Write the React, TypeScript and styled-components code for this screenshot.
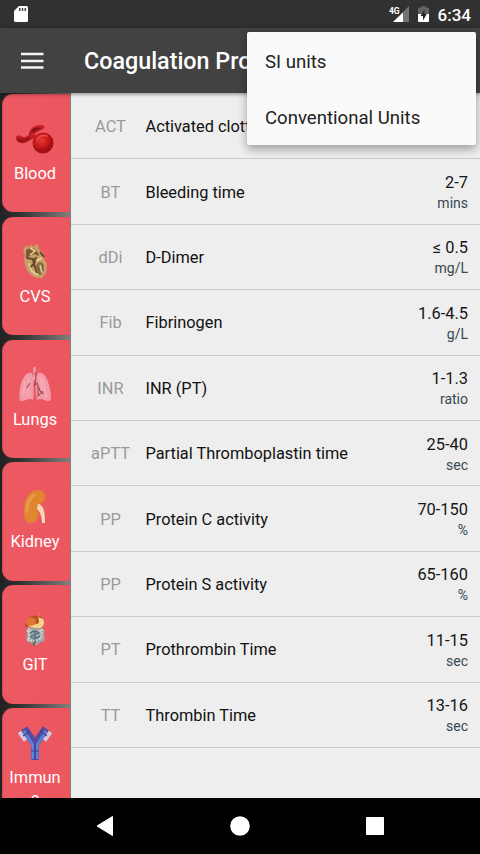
import React from 'react'
import styled, { createGlobalStyle } from 'styled-components'

const GlobalStyle = createGlobalStyle`
  body {
    margin: 0;
    background-color: #000;
    font-family: Roboto, 'Noto Sans', sans-serif;
  }
  * {
    box-sizing: border-box;
  }
  svg {
    display: block;
  }
`

const Screen = styled.div`
  position: relative;
  display: flex;
  flex-direction: column;
  width: 480px;
  height: 854px;
  overflow: hidden;
`

const StatusBar = styled.header`
  display: flex;
  align-items: center;
  flex: 0 0 28px;
  padding: 0 9px 0 14px;
  background: #313131;
  color: #fff;
`

const StatusIcons = styled.div`
  display: flex;
  align-items: center;
  gap: 8px;
  margin-left: auto;
`

const Clock = styled.span`
  padding-top: 2px;
  font-size: 17px;
  font-weight: 500;
  line-height: 20px;
`

const Toolbar = styled.div`
  display: flex;
  align-items: center;
  flex: 0 0 65px;
  padding-left: 21px;
  background: #424242;
  box-shadow: 0 1px 4px rgba(0, 0, 0, 0.45);
  z-index: 1;
`

const Title = styled.h1`
  margin: 1px 0 0 40px;
  color: #fff;
  font-size: 23.3px;
  font-weight: 500;
  white-space: nowrap;
`

const Content = styled.main`
  display: flex;
  flex: 1;
  min-height: 0;
`

const Sidebar = styled.nav`
  display: flex;
  flex-direction: column;
  gap: 4.4px;
  flex: 0 0 70.5px;
  padding: 1px 0.5px 0 2px;
  overflow: hidden;
  background: linear-gradient(90deg, #222 0, #2e2e2e 25%, #858080 100%);
`

const Tile = styled.div<{ $tall?: boolean }>`
  display: flex;
  flex-direction: column;
  align-items: center;
  flex: 0 0 118.4px;
  padding: ${props => props.$tall ? 16 : 26}px 2px 0 0;
  border-radius: 11px 0 0 11px;
  background: linear-gradient(90deg, #ed5a63, #ec565e);
  color: #fff;
  box-shadow: inset 1px 0 1px rgba(120, 40, 40, 0.25);
`

const TileLabel = styled.span`
  width: 54px;
  margin-top: 5px;
  font-size: 16.4px;
  line-height: 21px;
  text-align: center;
  word-break: break-all;
`

const List = styled.ul`
  flex: 1;
  margin: 0;
  padding: 1px 0 0;
  list-style: none;
  background: #eee;
`

const Row = styled.li`
  display: grid;
  grid-template-columns: 80px 1fr auto;
  align-items: center;
  height: 65.4px;
  padding-right: 12px;
  border-bottom: 1px solid #cacaca;
`

const Code = styled.span`
  padding-top: 1px;
  color: #999;
  font-size: 16.4px;
  text-align: center;
`

const Name = styled.span`
  margin-left: -5px;
  padding-top: 1px;
  color: #111;
  font-size: 16.35px;
`

const Range = styled.div`
  padding-top: 2px;
  color: #151515;
  font-size: 16.4px;
  line-height: 21px;
  text-align: right;
`

const Unit = styled.div`
  color: #37474f;
  font-size: 14px;
  line-height: 20px;
`

const Menu = styled.div`
  position: absolute;
  top: 32px;
  left: 247px;
  width: 228.5px;
  height: 112.5px;
  border-radius: 2px;
  background: #fafafa;
  box-shadow: 0 4px 10px rgba(0, 0, 0, 0.35);
  z-index: 2;
`

const MenuItem = styled.div`
  display: flex;
  align-items: center;
  height: 56px;
  padding: 3px 18px 0;
  color: #222;
  font-size: 18.6px;
`

const NavBar = styled.footer`
  display: flex;
  align-items: center;
  justify-content: space-between;
  flex: 0 0 56px;
  padding: 0 95px;
  background: #000;
`

const SdCardIcon = () => (
  <svg width="15" height="18" viewBox="0 0 15 18">
    <path d="M5 1h7.500Q14 1 14 2.500V15.500Q14 17 12.500 17H1.500Q0 17 0 15.500V6z" fill="#fff" />
    <path d="M5.700 3v3M8.500 3v3M11.300 3v3" stroke="#444" strokeWidth="1.500" />
  </svg>
)

const SignalIcon = () => (
  <svg width="21" height="18" viewBox="0 0 21 18">
    <path d="M20 1v16H4z" fill="#737373" />
    <path d="M14 7.500V17H4z" fill="#fff" />
    <text x="0" y="8.500" fill="#fff" fontSize="8.500" fontWeight="700" textLength="10.500">4G</text>
  </svg>
)

const BatteryIcon = () => (
  <svg width="12" height="18" viewBox="0 0 12 18">
    <path d="M3.500 1h4v1.500H10Q11 2.500 11 3.500V16Q11 17 10 17H1Q0 17 0 16V3.500Q0 2.500 1 2.500h2.500z" fill="#626262" />
    <path d="M0 9h11v7q0 1-1 1H1q-1 0-1-1z" fill="#fff" />
    <path d="M6.500 4.500 2.500 11H5v4.500L8.800 9H6.500z" fill="#262626" />
  </svg>
)

const MenuIcon = () => (
  <svg width="23" height="17" viewBox="0 0 23 17">
    <path d="M0 2h22.500M0 9h22.500M0 15.500h22.500" stroke="#f5f5f5" strokeWidth="2.300" />
  </svg>
)

const BloodIcon = () => (
  <svg width="40" height="38" viewBox="0 0 40 38">
    <defs>
      <radialGradient id="cell" cx="42%" cy="36%">
        <stop offset="0" stopColor="#e83a38" />
        <stop offset=".5" stopColor="#d4201f" />
        <stop offset="1" stopColor="#a90d14" />
      </radialGradient>
      <linearGradient id="flow" x1="0" y1="0" x2="0" y2="1">
        <stop offset="0" stopColor="#d6262b" />
        <stop offset="1" stopColor="#a00f16" />
      </linearGradient>
    </defs>
    <path d="M14 14c1-6 7-10 13-9 4 1 3 4-1 5l-9 5c-2 1-4 1-3-1z" fill="url(#flow)" />
    <path d="M16 10c4-3 7-3 10-2l-8 4z" fill="#85121a" />
    <path d="M1 18c0-4 4-3 7-1 3 1 6-3 10-4 4 0 3 5-1 6-4 2-7 5-11 4-3-1-5-2-5-5z" fill="url(#flow)" />
    <path d="M3 19c4 2 7 2 12-2" fill="none" stroke="#8e1117" strokeWidth="1.600" />
    <circle cx="28" cy="23" r="10.500" fill="url(#cell)" />
    <path d="M22 20c2-4 6-5 10-4" fill="none" stroke="#e9504b" strokeWidth="1.500" strokeLinecap="round" />
    <path d="M21 29c4 4 10 4 14-1" fill="none" stroke="#9c1319" strokeWidth="1.500" />
  </svg>
)

const HeartIcon = () => (
  <svg width="40" height="38" viewBox="0 0 40 38">
    <path d="M12 2l2 3 2-4 2 3 4-3 2 5 4 4 1 6 3 5-1 9-4 5c-6 1-12-3-15-8-2-5-4-10-2-15-3-3-2-7 2-10z" fill="#c6a069" />
    <path d="M11 7c5-4 12-1 13 6l-5-2-5 2-3 3z" fill="#785936" />
    <path d="M12 15l6 1 1 5-5 4M21 14l-2 7 3 9M25 9l4 5" fill="none" stroke="#62452c" strokeWidth="2" />
    <path d="M23 20c4-2 6 1 6 5s-2 7-4 7c-4-2-6-8-2-12z" fill="#836b40" />
    <path d="M14 20c0 6 4 10 9 12M15 5l5 3-5 4M21 18l6-3M25 22l2 8" fill="none" stroke="#edce91" strokeWidth="1.600" />
  </svg>
)

const LungsIcon = () => (
  <svg width="40" height="38" viewBox="0 0 40 38">
    <path d="M17 7C10 5 6 15 5 23c-1 5-1 11 1 12 4 1 7-4 12-1 1-8 1-20-1-27z" fill="#f29aa9" />
    <path d="M23 7c7-2 10 7 12 16 1 5 2 11-1 12-4 1-7-4-12-1-2-9-2-20 1-27z" fill="#f29aa9" />
    <path d="M10 15l-2 15M14 12l-1 18M28 12l3 19M25 11l3 16" stroke="#f8bac3" strokeWidth="2" opacity=".5" />
    <path d="M19.500 1v10l-3 6M20 10l4 7" fill="none" stroke="#ef9caa" strokeWidth="2.500" />
    <path d="M20 6l1 8-2 6 3-3 3 8 4 3M23 19v11l5-5M15 17l-3 5" fill="none" stroke="#a54b5c" strokeWidth="1.100" />
  </svg>
)

const KidneyIcon = () => (
  <svg width="40" height="38" viewBox="0 0 40 38">
    <path d="M22 2c8-1 10 8 6 12-4 2-6 3-5 7 2 7-1 14-7 14-6 1-8-8-7-15C10 10 14 3 22 2z" fill="#df862f" />
    <path d="M19 7c-4 3-7 9-7 16" fill="none" stroke="#e89b49" strokeWidth="3" strokeLinecap="round" />
    <path d="M23 16c2 0 5 2 6 7 1 5 1 8 1 12h-3c0-6-2-12-5-14z" fill="#f7d7b7" />
  </svg>
)

const GutIcon = () => (
  <svg width="40" height="38" viewBox="0 0 40 38">
    <path d="M10 16C10 7 16 3 25 5l4 4-5 5-14 2z" fill="#b65326" />
    <ellipse cx="16" cy="11" rx="5" ry="4.500" fill="#e17634" />
    <path d="M23 1v5l5 2c3 5-1 11-7 9l-8-1 11-4z" fill="#f3d58e" />
    <path d="M11 19c3-4 9-2 11-1 6-3 9 1 7 5 2 5 0 9-4 8-2 4-6 5-8 1-5 0-7-4-5-8z" fill="#9aa6a8" />
    <path d="M12 20h14M12 29l7 1 8-3M14 17v12M27 18l-1 10" fill="none" stroke="#d8d0c5" strokeWidth="2" strokeDasharray="2 1" />
    <path d="M15 22q5-4 9 0-9 3-8 4 5 3 9-1M20 20v12" fill="none" stroke="#536e81" strokeWidth="1.300" />
    <path d="M19 31v4" stroke="#8a6653" strokeWidth="2.500" />
  </svg>
)

const AntibodyIcon = () => (
  <svg width="40" height="38" viewBox="0 0 40 38">
    <path d="M20 36V20L9 4.500M20 20L31 4.500" fill="none" stroke="#574aa0" strokeWidth="7.500" />
    <path d="M17.800 35V21L9 7M22.200 35V21L31 7" fill="none" stroke="#5a83da" strokeWidth="2.800" />
    <path d="M4.500 8l6 8.500M35.500 8l-6 8.500" stroke="#d5c6e2" strokeWidth="4" />
    <path d="M16 27h8M8 12l7-5M32 12l-7-5M20 19v17" stroke="#433c8e" strokeWidth="1.200" />
  </svg>
)

const organs = [
  { label: 'Blood', icon: <BloodIcon /> },
  { label: 'CVS', icon: <HeartIcon /> },
  { label: 'Lungs', icon: <LungsIcon /> },
  { label: 'Kidney', icon: <KidneyIcon /> },
  { label: 'GIT', icon: <GutIcon /> },
  // two-line label, so the content starts higher
  { label: 'Immune', icon: <AntibodyIcon />, tall: true }
]

const tests = [
  { code: 'ACT', name: 'Activated clotting time', range: '', unit: '' },
  { code: 'BT', name: 'Bleeding time', range: '2-7', unit: 'mins' },
  { code: 'dDi', name: 'D-Dimer', range: '≤ 0.5', unit: 'mg/L' },
  { code: 'Fib', name: 'Fibrinogen', range: '1.6-4.5', unit: 'g/L' },
  { code: 'INR', name: 'INR (PT)', range: '1-1.3', unit: 'ratio' },
  { code: 'aPTT', name: 'Partial Thromboplastin time', range: '25-40', unit: 'sec' },
  { code: 'PP', name: 'Protein C activity', range: '70-150', unit: '%' },
  { code: 'PP', name: 'Protein S activity', range: '65-160', unit: '%' },
  { code: 'PT', name: 'Prothrombin Time', range: '11-15', unit: 'sec' },
  { code: 'TT', name: 'Thrombin Time', range: '13-16', unit: 'sec' }
]

export default function App() {
  return (
    <Screen>
      <GlobalStyle />
      <StatusBar>
        <SdCardIcon />
        <StatusIcons>
          <SignalIcon />
          <BatteryIcon />
          <Clock>6:34</Clock>
        </StatusIcons>
      </StatusBar>
      <Toolbar>
        <MenuIcon />
        <Title>Coagulation Profile</Title>
      </Toolbar>
      <Content>
        <Sidebar>
          {organs.map(organ => (
            <Tile key={organ.label} $tall={organ.tall}>
              {organ.icon}
              <TileLabel>{organ.label}</TileLabel>
            </Tile>
          ))}
        </Sidebar>
        <List>
          {tests.map(test => (
            <Row key={test.name}>
              <Code>{test.code}</Code>
              <Name>{test.name}</Name>
              <Range>
                {test.range}
                <Unit>{test.unit}</Unit>
              </Range>
            </Row>
          ))}
        </List>
      </Content>
      <NavBar>
        <svg width="20" height="22" viewBox="0 0 20 22">
          <path d="M17.500 1.500v19L2 11z" fill="#fff" stroke="#fff" strokeLinejoin="round" />
        </svg>
        <svg width="20" height="20" viewBox="0 0 20 20">
          <circle cx="10" cy="10" r="9.800" fill="#fff" />
        </svg>
        <svg width="20" height="20" viewBox="0 0 20 20">
          <rect x="1" y="1" width="18" height="18" rx="0.700" fill="#fff" />
        </svg>
      </NavBar>
      <Menu>
        <MenuItem>SI units</MenuItem>
        <MenuItem>Conventional Units</MenuItem>
      </Menu>
    </Screen>
  )
}
